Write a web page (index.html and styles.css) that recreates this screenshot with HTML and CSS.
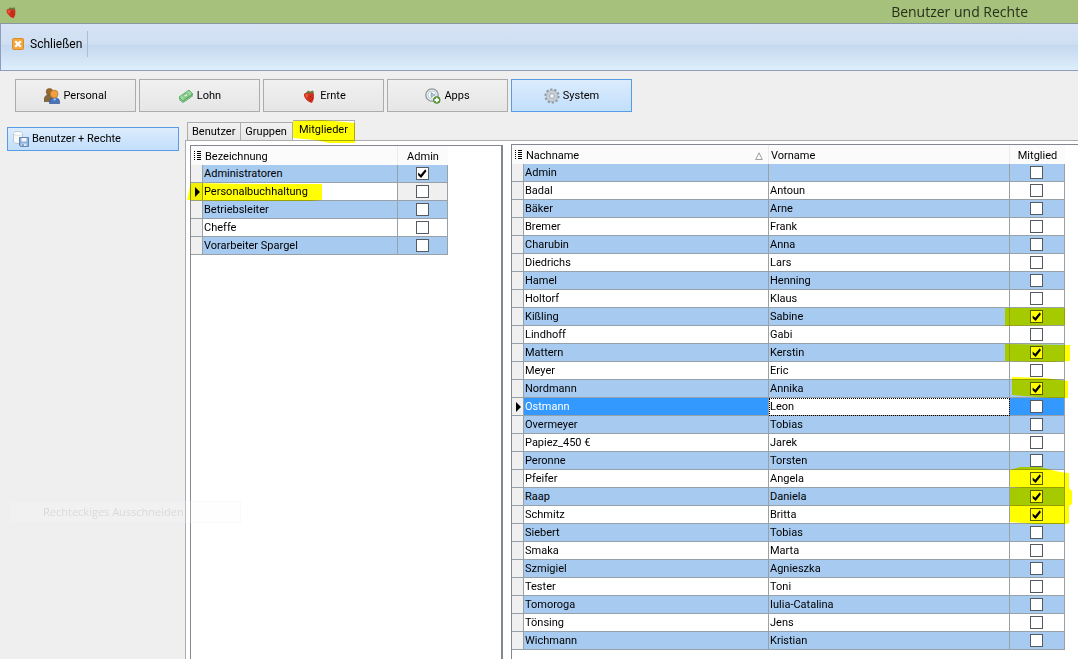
FILE: index.html
```
<!DOCTYPE html>
<html lang="de">

<head>
    <meta charset="UTF-8" />
    <meta name="viewport" content="width=device-width, initial-scale=1.0" />
    <title>Benutzer und Rechte</title>
    <link rel="stylesheet" href="styles.css">
</head>

<body>
    <svg class="defs" width="0" height="0" aria-hidden="true">
        <symbol id="strawberry" viewBox="0 0 16 16">
            <path d="M3 6Q4 4 8 4.500Q13 3.500 13 7Q13.500 11 11 15Q6.500 14 4 10Q2.500 8 3 6Z" fill="#cf2f1c" />
            <path d="M4 6.500Q6 5 7.500 6.500Q7 9 5.500 10Q4 8.500 4 6.500Z" fill="#e8593b" />
            <path d="M4.500 5.500L7 2.500L9 3.500L12 2.500L13 5L9 5.500L7 5Z" fill="#6b7a3c" />
            <path d="M9 8h1v1h-1zM11 10h1v1h-1zM9 12h1v1h-1z" fill="#8d1a10" />
        </symbol>
    </svg>

    <header class="titlebar">
        <svg class="app-icon" width="14" height="14"><use href="#strawberry" /></svg>
        <h1>Benutzer und Rechte</h1>
    </header>

    <div class="toolbar">
        <button class="close-btn">
            <svg width="12" height="12" viewBox="0 0 12 12" aria-hidden="true">
                <rect x=".5" y=".5" width="11" height="11" rx="1" fill="#f4a73c" stroke="#e08b26" />
                <path d="M3.200 3.200L8.800 8.800M8.800 3.200L3.200 8.800" stroke="#fff" stroke-width="2.200" />
            </svg>
            Schließen
        </button>
    </div>

    <nav class="modules">
        <button class="module">
            <svg width="16" height="16" viewBox="0 0 16 16" aria-hidden="true">
                <path d="M0 13.500Q0 7 4 7Q9 7 9 13.500Z" fill="#87683a" stroke="#5c4727" stroke-width=".6" />
                <circle cx="5.500" cy="3.800" r="3.300" fill="#9a6a2c" stroke="#6c4718" stroke-width=".6" />
                <path d="M5.500 15.500Q5 9.500 10.500 9.500Q16 9.500 15.700 15.500Z" fill="#4774bd" stroke="#274a88" stroke-width=".6" />
                <circle cx="10.200" cy="6" r="3.900" fill="#eea143" stroke="#b06c1c" stroke-width=".6" />
                <path d="M9 10.500L10.500 13L12.500 10.500Z" fill="#a9c2ea" />
            </svg>
            Personal
        </button>
        <button class="module">
            <svg width="16" height="16" viewBox="0 0 16 16" aria-hidden="true">
                <path d="M1 9L11 2L15 6L14.500 8.500L5 15L1.500 12Z" fill="#4f9e5a" />
                <path d="M1 9L11 2L14.500 6L4.800 12.800Z" fill="#98d99b" stroke="#5cad66" stroke-width=".8" />
                <ellipse cx="7.800" cy="7.500" rx="2.200" ry="1.600" transform="rotate(-35 7.800 7.500)" fill="#d3f2d2" stroke="#4f9e5a" stroke-width=".7" />
                <path d="M2 11L5 14L14.500 7.500" fill="none" stroke="#b5e5b5" stroke-width=".6" />
            </svg>
            Lohn
        </button>
        <button class="module">
            <svg width="16" height="16" aria-hidden="true"><use href="#strawberry" /></svg>
            Ernte
        </button>
        <button class="module">
            <svg width="16" height="16" viewBox="0 0 16 16" aria-hidden="true">
                <circle cx="7" cy="7" r="6.200" fill="#e8eff2" stroke="#8e989c" stroke-width="1.300" />
                <circle cx="7" cy="7" r="4" fill="#fff" stroke="#b7c5ca" stroke-width=".8" />
                <path d="M6 4.500L10 7L6 9.500Z" fill="#a9c8d6" stroke="#7195a5" stroke-width=".6" />
                <circle cx="11.800" cy="12" r="3.400" fill="#5a9c37" stroke="#3e7a21" stroke-width=".6" />
                <path d="M11.800 9.800V14.200M9.600 12H14" stroke="#fff" stroke-width="1.800" />
            </svg>
            Apps
        </button>
        <button class="module active">
            <svg width="16" height="16" viewBox="0 0 16 16" aria-hidden="true">
                <circle cx="8" cy="8" r="6.600" fill="none" stroke="#8f979e" stroke-width="2" stroke-dasharray="2.300 1.850" />
                <circle cx="8" cy="8" r="4.200" fill="none" stroke="#c9ced2" stroke-width="3" />
                <circle cx="8" cy="8" r="5.700" fill="none" stroke="#9ba3a9" stroke-width=".6" />
                <circle cx="8" cy="8" r="2.500" fill="#e6f1fb" stroke="#959da4" stroke-width=".8" />
            </svg>
            System
        </button>
    </nav>

    <main class="workspace">
        <aside class="sidebar">
            <button class="side-item">
                <svg width="16" height="16" viewBox="0 0 16 16" aria-hidden="true">
                    <path d="M.5 2.500Q.5.500 5 .5Q9.500.500 9.500 2.500V11Q9.500 12.500 5 12.500Q.5 12.500.5 11Z" fill="#f6f8fa" stroke="#aebccb" stroke-width=".8" />
                    <ellipse cx="5" cy="2.500" rx="4.500" ry="1.800" fill="#fff" stroke="#c3ceda" stroke-width=".6" />
                    <path d="M6.500 6.500H15.500V15.500H7.500L6.500 14.500Z" fill="#8db1dc" stroke="#5f88b8" />
                    <path d="M8.500 7H13.500V10.500H8.500Z" fill="#f4f8fd" />
                    <path d="M8.500 12.500H13.500V15H8.500Z" fill="#dce7f4" />
                    <path d="M9.500 13H10.500V15H9.500Z" fill="#3e689c" />
                </svg>
                Benutzer + Rechte
            </button>
        </aside>

        <section class="content">
            <div class="tabs" role="tablist">
                <button class="tab" role="tab">Benutzer</button>
                <button class="tab" role="tab">Gruppen</button>
                <button class="tab selected" role="tab" aria-selected="true">
                    Mitglieder
                    <svg class="marker marker-tab" viewBox="0 0 62 24" preserveAspectRatio="none" aria-hidden="true">
                        <path d="M0 1L30 0L62 3V23L36 23L22 20L0 18Z" />
                    </svg>
                </button>
            </div>
            <div class="panel">
                <div class="grid groups">
                    <table>
                        <colgroup>
                            <col class="col-mark"><col><col class="col-admin">
                        </colgroup>
                        <thead>
                            <tr>
                                <th><span class="menu-dots"></span></th>
                                <th>Bezeichnung</th>
                                <th class="check">Admin</th>
                            </tr>
                        </thead>
                        <tbody id="groupRows"></tbody>
                    </table>
                </div>
                <div class="grid members">
                    <table>
                        <colgroup>
                            <col class="col-mark"><col class="col-name"><col><col class="col-member">
                        </colgroup>
                        <thead>
                            <tr>
                                <th><span class="menu-dots"></span></th>
                                <th>
                                    <div class="sorted">
                                        Nachname
                                        <svg width="8" height="8" viewBox="0 0 8 8" aria-hidden="true">
                                            <path d="M4 .8L7.300 7.500H.7Z" fill="none" stroke="#888" stroke-width=".8" />
                                        </svg>
                                    </div>
                                </th>
                                <th>Vorname</th>
                                <th class="check">Mitglied</th>
                            </tr>
                        </thead>
                        <tbody id="memberRows"></tbody>
                    </table>
                </div>
            </div>
        </section>
    </main>

    <div class="ghost-hint">Rechteckiges Ausschneiden</div>

    <script>
        const groups = [
            { name: "Administratoren", admin: true },
            { name: "Personalbuchhaltung", current: true },
            { name: "Betriebsleiter" },
            { name: "Cheffe" },
            { name: "Vorarbeiter Spargel" }
        ];

        const members = [
            ["Admin", ""],
            ["Badal", "Antoun"],
            ["Bäker", "Arne"],
            ["Bremer", "Frank"],
            ["Charubin", "Anna"],
            ["Diedrichs", "Lars"],
            ["Hamel", "Henning"],
            ["Holtorf", "Klaus"],
            ["Kißling", "Sabine"],
            ["Lindhoff", "Gabi"],
            ["Mattern", "Kerstin"],
            ["Meyer", "Eric"],
            ["Nordmann", "Annika"],
            ["Ostmann", "Leon"],
            ["Overmeyer", "Tobias"],
            ["Papiez_450 €", "Jarek"],
            ["Peronne", "Torsten"],
            ["Pfeifer", "Angela"],
            ["Raap", "Daniela"],
            ["Schmitz", "Britta"],
            ["Siebert", "Tobias"],
            ["Smaka", "Marta"],
            ["Szmigiel", "Agnieszka"],
            ["Tester", "Toni"],
            ["Tomoroga", "Iulia-Catalina"],
            ["Tönsing", "Jens"],
            ["Wichmann", "Kristian"]
        ];

        // Felt-pen strokes over the member cells, in cell coordinates (54 x 18)
        const strokes = {
            "Kißling": "M-5 0H55V17L-5 18Z",
            "Mattern": "M-5 0L60 1V17L40 18L-5 17Z",
            "Nordmann": "M2 -3L35 -2L58 1V18H40L2 15Z",
            "Pfeifer": "M0 0L10 -3H30L50 2L59 3V18H12L0 17Z",
            "Raap": "M0 0H59L62 3V16L59 18H0Z",
            "Schmitz": "M0 0H59V17L54 19H40L0 16Z"
        };

        const currentMember = "Ostmann";

        function checkbox(label, checked) {
            return `<input type="checkbox" aria-label="${label}" ${checked ? "checked" : ""} />`;
        }

        document.getElementById("groupRows").innerHTML = groups.map(g => `
            <tr class="${g.current ? "current" : ""}">
                <td class="mark"></td>
                <td>${g.name}${g.current ? `
                    <svg class="marker marker-group" viewBox="0 0 135 20" preserveAspectRatio="none">
                        <path d="M4 0L60 1H135V17L110 19L60 19L0 17Z" />
                    </svg>` : ""}
                </td>
                <td class="check">${checkbox("Admin " + g.name, g.admin)}</td>
            </tr>`).join("");

        document.getElementById("memberRows").innerHTML = members.map(([last, first]) => `
            <tr class="${last === currentMember ? "current" : ""}">
                <td class="mark"></td>
                <td>${last}</td>
                <td class="first-name">${first}</td>
                <td class="check">${checkbox("Mitglied " + last, last in strokes)}${last in strokes ? `
                    <svg class="marker marker-cell" viewBox="0 0 54 18"><path d="${strokes[last]}" /></svg>` : ""}
                </td>
            </tr>`).join("");
    </script>
</body>

</html>
```

FILE: styles.css
```
* {
    box-sizing: border-box;
}

body {
    margin: 0;
    min-height: 100vh;
    display: flex;
    flex-direction: column;
    background-color: #efefef;
    color: #000;
    font-family: Roboto, Tahoma, sans-serif;
    font-size: 11px;
    line-height: 16px;
    overflow-x: hidden;
}

button {
    font: inherit;
    color: inherit;
    cursor: pointer;
}

.defs {
    position: absolute;
}

.titlebar {
    display: flex;
    align-items: center;
    height: 24px;
    padding: 0 50px 0 4px;
    background-color: #a6c17c;
    border-bottom: 1px solid #8798a0;
}

.titlebar h1 {
    margin: 0 0 0 auto;
    font-family: "Open Sans", "Segoe UI", sans-serif;
    font-size: 14px;
    font-weight: normal;
    color: #26301a;
}

.toolbar {
    display: flex;
    align-items: flex-start;
    height: 47px;
    padding: 7px 0 0 1px;
    background: linear-gradient(#d7e2f5 0%, #cfdff2 44%, #c4d8ef 46%, #ddeefb 100%);
    border-bottom: 1px solid #8d9dbd;
    border-left: 1px solid #8d9dbd;
}

.close-btn {
    display: flex;
    align-items: center;
    gap: 6px;
    height: 26px;
    padding: 0 5px 0 10px;
    background: none;
    border: none;
    border-right: 1px solid #adbdd4;
    font-size: 12px;
}

.modules {
    display: flex;
    gap: 3px;
    padding: 8px 15px 0;
}

.module {
    display: flex;
    align-items: center;
    justify-content: center;
    gap: 3px;
    width: 121px;
    height: 33px;
    padding: 0;
    background: linear-gradient(#f0f0f0, #e6e6e6);
    border: 1px solid #acacac;
}

.module.active,
.side-item {
    background: linear-gradient(#dcecfc, #c2dffc);
    border: 1px solid #569de5;
}

.workspace {
    flex: 1;
    display: flex;
    padding-top: 8px;
}

.sidebar {
    flex: 0 0 185px;
    padding: 7px 6px 0 7px;
}

.side-item {
    display: flex;
    align-items: center;
    gap: 3px;
    width: 100%;
    height: 24px;
    padding: 0 5px;
}

.content {
    flex: 1;
    min-width: 0;
    display: flex;
    flex-direction: column;
}

.tabs {
    display: flex;
    align-items: flex-end;
    height: 20px;
    padding-left: 2px;
}

.tab {
    position: relative;
    height: 18px;
    padding: 1px 5px 0 4px;
    background: linear-gradient(#f2f2f2, #e6e6e6);
    border: 1px solid #acacac;
    border-bottom: none;
}

.tab + .tab {
    border-left: none;
}

.tab.selected {
    height: 20px;
    padding: 0 6px 1px;
    background: #fff;
}

.panel {
    flex: 1;
    display: flex;
    gap: 8px;
    padding: 3px 0 0 4px;
    background-color: #fff;
    border-top: 1px solid #acacac;
    border-left: 1px solid #acacac;
}

.grid {
    border-top: 1px solid #828790;
    border-left: 1px solid #828790;
}

.groups {
    flex: 0 0 313px;
    margin-top: 1px;
    border-right: 2px solid #828790;
    padding-right: 53px;
}

.members {
    flex: 1;
    padding-right: 13px;
}

table {
    width: 100%;
    table-layout: fixed;
    border-collapse: separate;
    border-spacing: 0;
}

.col-mark {
    width: 12px;
}

.col-admin {
    width: 50px;
}

.col-name {
    width: 245px;
}

.col-member {
    width: 55px;
}

th {
    height: 19px;
    padding: 2px 2px 0;
    background-color: #fbfbfb;
    border-right: 1px solid #ececec;
    font-weight: normal;
    text-align: left;
}

th:first-child {
    padding: 0 0 0 3px;
    border-right: none;
}

th.check {
    text-align: center;
    border-right: none;
}

td {
    position: relative;
    height: 18px;
    padding: 1px 1px 0;
    border-right: 1px solid #98a0a8;
    border-bottom: 1px solid #98a0a8;
    white-space: nowrap;
}

tbody tr:nth-child(odd) td {
    background-color: #a6caf0;
}

tbody tr td.mark {
    padding: 0;
    background-color: #f0f0f0;
}

td.check {
    padding: 0 1px 0 0;
}

.groups .current .check {
    background-color: #f0f0f0;
}

.members tbody .current td {
    background-color: #3399ff;
    color: #fff;
}

.members tbody .current .mark {
    background-color: #f0f0f0;
}

.members tbody .current .first-name {
    background-color: #fff;
    color: #000;
    outline: 1px dotted #000;
    outline-offset: -1px;
}

/* arrow of the current row */
.current .mark::before {
    content: "";
    display: block;
    width: 0;
    margin-left: 4px;
    border: 5px solid transparent;
    border-left: 5px solid #000;
    border-right: none;
}

.menu-dots {
    display: block;
    width: 7px;
    height: 9px;
    background:
        repeating-linear-gradient(#000 0 1px, transparent 1px 2px) 3px 0 / 4px 9px no-repeat,
        repeating-linear-gradient(#000 0 1px, transparent 1px 2px) 0 0 / 1px 9px no-repeat;
}

.sorted {
    display: flex;
    align-items: center;
    justify-content: space-between;
    padding-right: 3px;
}

input[type='checkbox'] {
    appearance: none;
    display: block;
    width: 13px;
    height: 13px;
    margin: 0 auto;
    background-color: #fff;
    border: 1px solid #555b62;
}

input[type='checkbox']:checked::before {
    content: "";
    display: block;
    width: 11px;
    height: 11px;
    background-color: #000;
    clip-path: polygon(15% 42%, 38% 62%, 80% 12%, 90% 30%, 42% 90%, 15% 66%);
}

/* yellow felt-pen strokes */
.marker {
    position: absolute;
    overflow: visible;
    fill: #ffff00;
    mix-blend-mode: multiply;
    pointer-events: none;
}

.marker-tab {
    top: -1px;
    left: 0;
    width: 62px;
    height: 24px;
}

.marker-group {
    top: 0;
    left: -16px;
    width: 135px;
    height: 20px;
}

.marker-cell {
    top: 0;
    left: 0;
    width: 54px;
    height: 18px;
}

.ghost-hint {
    position: absolute;
    top: 501px;
    left: 10px;
    width: 231px;
    height: 22px;
    padding: 2px 32px;
    border: 1px solid rgba(225, 235, 242, 0.2);
    background-color: rgba(248, 250, 252, 0.2);
    color: #dadada;
    font-family: "Open Sans", "Segoe UI", sans-serif;
    white-space: nowrap;
    pointer-events: none;
}
```
